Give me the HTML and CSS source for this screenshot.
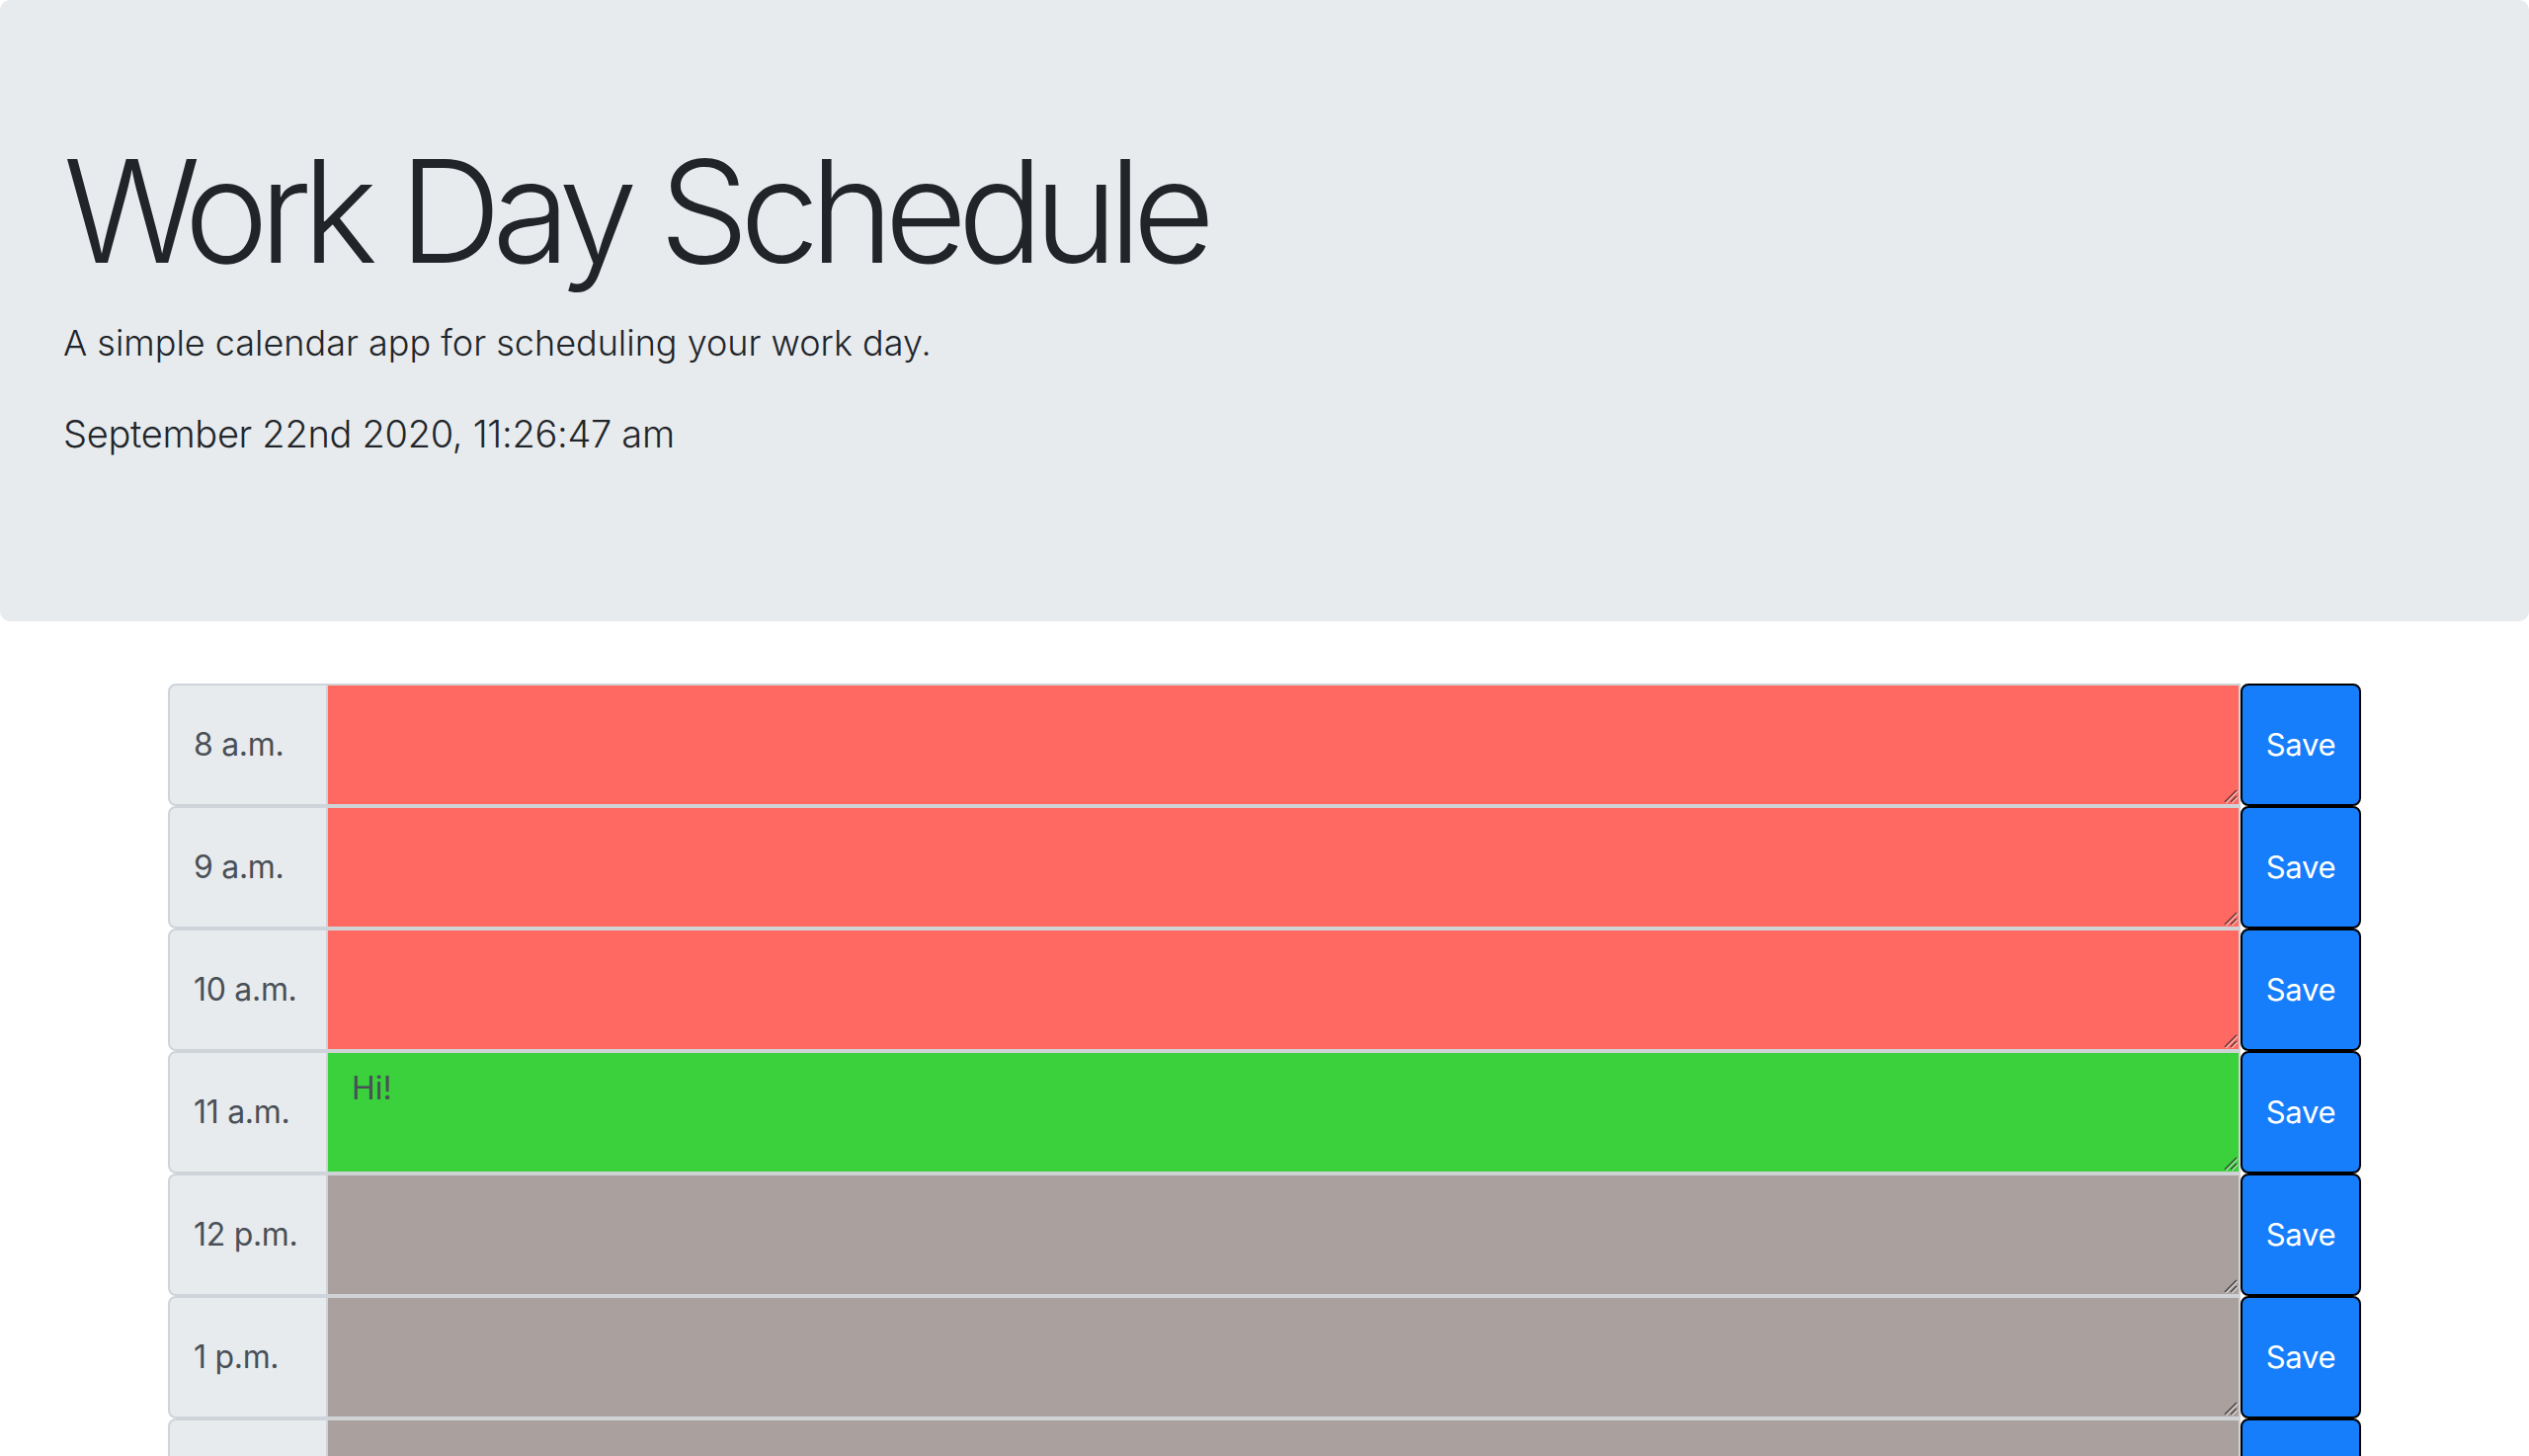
FILE: index.html
```html
<!DOCTYPE html>
<html lang="en">
<head>
<meta charset="utf-8">
<title>Work Day Scheduler</title>
<link rel="stylesheet" href="styles.css">
</head>
<body>
<header class="jumbotron">
  <h1 class="display-3">Work Day Schedule</h1>
  <p class="lead lead-sub">A simple calendar app for scheduling your work day.</p>
  <p class="lead current-day">September 22nd 2020, 11:26:47 am</p>
</header>
<div class="container">
  <div class="time-block">
    <div class="hour">8 a.m.</div>
    <div class="desc-wrap"><textarea class="description past"></textarea><svg class="grip" width="16" height="16" viewBox="0 0 16 16"><path d="M15 3L3 15M15 9L9 15" stroke="#ffffff" stroke-opacity="0.55" stroke-width="1.5"/><path d="M14 2L2 14M14 8L8 14" stroke="#3a2a2a" stroke-opacity="0.8" stroke-width="1.5"/></svg></div>
    <button class="save-btn">Save</button>
  </div>
  <div class="time-block">
    <div class="hour">9 a.m.</div>
    <div class="desc-wrap"><textarea class="description past"></textarea><svg class="grip" width="16" height="16" viewBox="0 0 16 16"><path d="M15 3L3 15M15 9L9 15" stroke="#ffffff" stroke-opacity="0.55" stroke-width="1.5"/><path d="M14 2L2 14M14 8L8 14" stroke="#3a2a2a" stroke-opacity="0.8" stroke-width="1.5"/></svg></div>
    <button class="save-btn">Save</button>
  </div>
  <div class="time-block">
    <div class="hour">10 a.m.</div>
    <div class="desc-wrap"><textarea class="description past"></textarea><svg class="grip" width="16" height="16" viewBox="0 0 16 16"><path d="M15 3L3 15M15 9L9 15" stroke="#ffffff" stroke-opacity="0.55" stroke-width="1.5"/><path d="M14 2L2 14M14 8L8 14" stroke="#3a2a2a" stroke-opacity="0.8" stroke-width="1.5"/></svg></div>
    <button class="save-btn">Save</button>
  </div>
  <div class="time-block">
    <div class="hour">11 a.m.</div>
    <div class="desc-wrap"><textarea class="description present">Hi!</textarea><svg class="grip" width="16" height="16" viewBox="0 0 16 16"><path d="M15 3L3 15M15 9L9 15" stroke="#ffffff" stroke-opacity="0.55" stroke-width="1.5"/><path d="M14 2L2 14M14 8L8 14" stroke="#2a2a2a" stroke-opacity="0.8" stroke-width="1.5"/></svg></div>
    <button class="save-btn">Save</button>
  </div>
  <div class="time-block">
    <div class="hour">12 p.m.</div>
    <div class="desc-wrap"><textarea class="description future"></textarea><svg class="grip" width="16" height="16" viewBox="0 0 16 16"><path d="M15 3L3 15M15 9L9 15" stroke="#ffffff" stroke-opacity="0.55" stroke-width="1.5"/><path d="M14 2L2 14M14 8L8 14" stroke="#2a2a2a" stroke-opacity="0.8" stroke-width="1.5"/></svg></div>
    <button class="save-btn">Save</button>
  </div>
  <div class="time-block">
    <div class="hour">1 p.m.</div>
    <div class="desc-wrap"><textarea class="description future"></textarea><svg class="grip" width="16" height="16" viewBox="0 0 16 16"><path d="M15 3L3 15M15 9L9 15" stroke="#ffffff" stroke-opacity="0.55" stroke-width="1.5"/><path d="M14 2L2 14M14 8L8 14" stroke="#2a2a2a" stroke-opacity="0.8" stroke-width="1.5"/></svg></div>
    <button class="save-btn">Save</button>
  </div>
  <div class="time-block">
    <div class="hour">2 p.m.</div>
    <div class="desc-wrap"><textarea class="description future"></textarea><svg class="grip" width="16" height="16" viewBox="0 0 16 16"><path d="M15 3L3 15M15 9L9 15" stroke="#ffffff" stroke-opacity="0.55" stroke-width="1.5"/><path d="M14 2L2 14M14 8L8 14" stroke="#2a2a2a" stroke-opacity="0.8" stroke-width="1.5"/></svg></div>
    <button class="save-btn">Save</button>
  </div>
  <div class="time-block">
    <div class="hour">3 p.m.</div>
    <div class="desc-wrap"><textarea class="description future"></textarea><svg class="grip" width="16" height="16" viewBox="0 0 16 16"><path d="M15 3L3 15M15 9L9 15" stroke="#ffffff" stroke-opacity="0.55" stroke-width="1.5"/><path d="M14 2L2 14M14 8L8 14" stroke="#2a2a2a" stroke-opacity="0.8" stroke-width="1.5"/></svg></div>
    <button class="save-btn">Save</button>
  </div>
  <div class="time-block">
    <div class="hour">4 p.m.</div>
    <div class="desc-wrap"><textarea class="description future"></textarea><svg class="grip" width="16" height="16" viewBox="0 0 16 16"><path d="M15 3L3 15M15 9L9 15" stroke="#ffffff" stroke-opacity="0.55" stroke-width="1.5"/><path d="M14 2L2 14M14 8L8 14" stroke="#2a2a2a" stroke-opacity="0.8" stroke-width="1.5"/></svg></div>
    <button class="save-btn">Save</button>
  </div>
  <div class="time-block">
    <div class="hour">5 p.m.</div>
    <div class="desc-wrap"><textarea class="description future"></textarea><svg class="grip" width="16" height="16" viewBox="0 0 16 16"><path d="M15 3L3 15M15 9L9 15" stroke="#ffffff" stroke-opacity="0.55" stroke-width="1.5"/><path d="M14 2L2 14M14 8L8 14" stroke="#2a2a2a" stroke-opacity="0.8" stroke-width="1.5"/></svg></div>
    <button class="save-btn">Save</button>
  </div>
</div>
</body>
</html>
```
FILE: styles.css
```css
html, body {
  margin: 0;
  padding: 0;
}
body {
  font-family: Inter, "Noto Sans", "Liberation Sans", sans-serif;
  color: #212529;
  background: #ffffff;
}
.jumbotron {
  background: #e8ebee;
  padding: 128px 64px 128px;
  border-radius: 10px;
  margin-bottom: 63px;
}
.display-3 {
  font-size: 144px;
  font-weight: 300;
  line-height: 1.2;
  letter-spacing: -9.4px;
  margin: 0 0 16px;
  color: #212529;
}
.lead {
  font-size: 38px;
  font-weight: 300;
  line-height: 60px;
  letter-spacing: -0.3px;
  margin: 0 0 32px;
  color: #212529;
}
.lead-sub {
  font-size: 36px;
  letter-spacing: 0;
}
.container {
  width: 2220px;
  margin: 0 auto;
}
.time-block {
  display: flex;
  height: 124px;
}
.hour {
  box-sizing: border-box;
  width: 162px;
  flex: none;
  display: flex;
  align-items: center;
  padding: 0 24px;
  background: #e8ebee;
  border: 2px solid #ced4da;
  border-radius: 8px 0 0 8px;
  color: #495057;
  font-size: 32px;
  letter-spacing: -0.3px;
}
.desc-wrap {
  position: relative;
  flex: 1;
  display: flex;
}
.description {
  flex: 1;
  box-sizing: border-box;
  height: 124px;
  margin: 0;
  padding: 12px 24px;
  border: 2px solid #d0d3d6;
  border-left: 0;
  font-family: Inter, "Noto Sans", "Liberation Sans", sans-serif;
  font-size: 32px;
  line-height: 1.5;
  color: #495057;
  outline: none;
  resize: none;
}
.grip {
  position: absolute;
  right: 2px;
  bottom: 2px;
  pointer-events: none;
}
.past {
  background: #ff6962;
}
.present {
  background: #3ad13c;
}
.future {
  background: #aaa19f;
}
.save-btn {
  box-sizing: border-box;
  width: 122px;
  flex: none;
  height: 124px;
  margin: 0;
  padding: 0;
  background: #167dfb;
  border: 2px solid #000000;
  border-radius: 8px;
  color: #ffffff;
  font-family: Inter, "Noto Sans", "Liberation Sans", sans-serif;
  font-size: 31px;
  letter-spacing: -0.3px;
}
```
